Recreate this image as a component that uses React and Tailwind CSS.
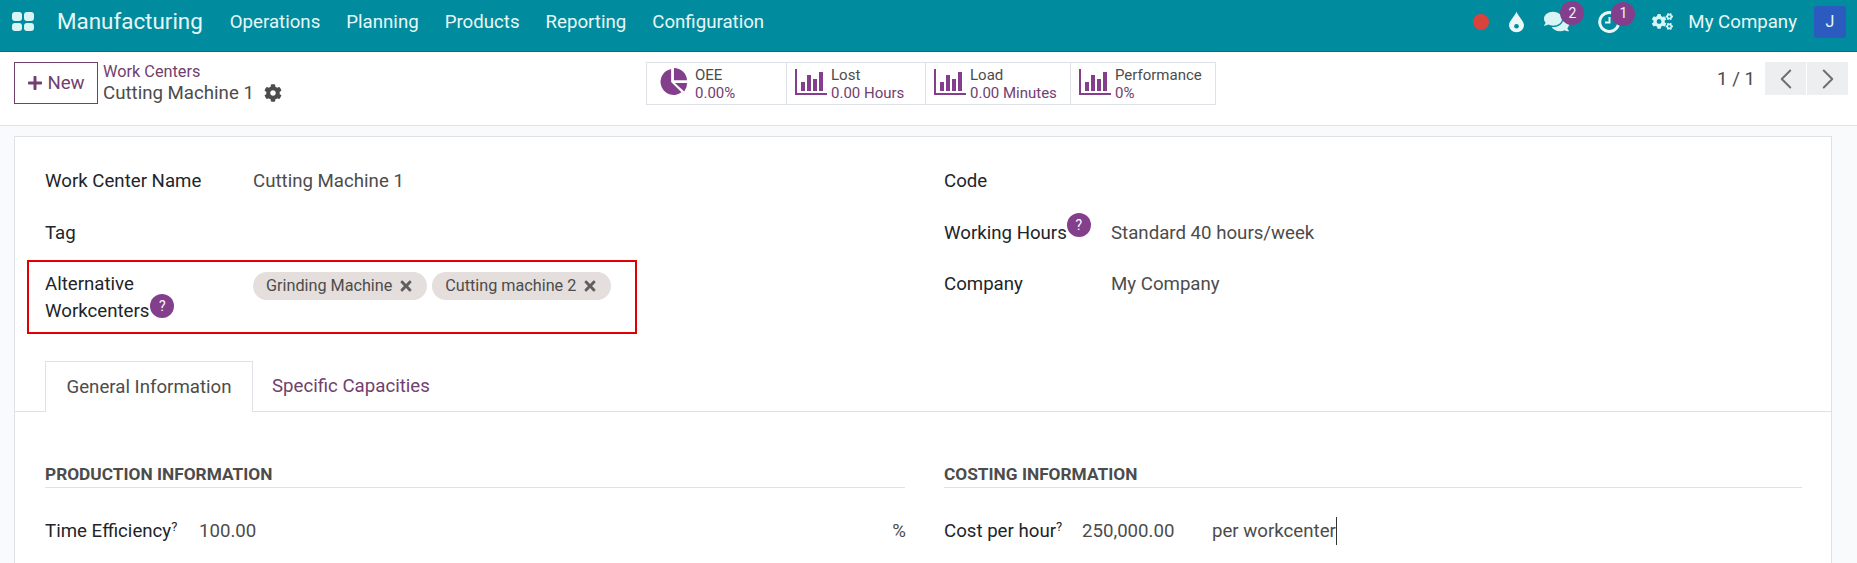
import React from 'react';
import { FaPlus, FaCog, FaCogs, FaComments, FaTimes } from 'react-icons/fa';
import { ChevronLeft, ChevronRight } from 'lucide-react';

const navItems = ['Operations', 'Planning', 'Products', 'Reporting', 'Configuration'];

const BarChart = () => (
  <svg viewBox="0 0 32 26" className="w-[32px] h-[26px] mb-[3px] fill-[#843f8c] shrink-0">
    <path d="M0 0h2v24h30v2H0z" />
    <path d="M6 13h4v9H6zM12 6h4v16h-4zM18 10h4v12h-4zM24 3h4v19h-4z" />
  </svg>
);

const Pie = () => (
  <svg viewBox="0 0 32 32" className="w-[30px] h-[30px] mb-[3px] mr-[3px] fill-[#843f8c] shrink-0">
    <path d="M14 2A14 14 0 1 0 25 27L14 16Z" />
    <path d="M17 1A14 14 0 0 1 31 14H17Z" />
    <path d="M18 17H31A14 14 0 0 1 28 26Z" />
  </svg>
);

const Stat = ({ icon, label, value, className }) => (
  <div className={`flex items-center h-full border-r border-[#dee2e6] last:border-r-0 ${className}`}>
    {icon}
    <div className="ml-[4px] text-[15px] leading-[18px]">
      <div className="text-[#4c4c4c]">{label}</div>
      <div className="text-[#71406f]">{value}</div>
    </div>
  </div>
);

const Help = ({ className }) => (
  <span className={`inline-flex w-[24px] h-[24px] rounded-full bg-[#843f8c] text-white text-[14px] items-center justify-center ${className}`}>?</span>
);

const Tag = ({ children }) => (
  <span className="inline-flex items-center h-[28px] px-[13px] rounded-full bg-[#e4dedc] text-[#4c4c4c] text-[16.200px]">
    {children}
    <FaTimes className="ml-[6px] text-[16px] text-[#5f5f5f]" />
  </span>
);

export default function App() {
  return (
    <div className="w-full h-[563px] overflow-hidden bg-[#f9fafb] font-['Roboto',sans-serif] text-[#212529]">
      {/* navbar */}
      <div className="h-[52px] pb-[8px] bg-[#008c9e] border-b border-[#006f7d] flex items-center text-[#e8f7f8]">
        <div className="ml-[12px] w-[22px] h-[19px] grid grid-cols-2 gap-[2px]">
          <span className="rounded-[3px] bg-[#d9f4f5]" />
          <span className="rounded-[3px] bg-[#d9f4f5]" />
          <span className="rounded-[3px] bg-[#d9f4f5]" />
          <span className="rounded-[3px] bg-[#d9f4f5]" />
        </div>
        <div className="ml-[23px] mr-[14px] text-[22.400px]">Manufacturing</div>
        {navItems.map(item => (
          <div key={item} className="px-[13px] text-[18.670px]">{item}</div>
        ))}
        <div className="ml-auto flex items-center">
          <span className="w-[16px] h-[16px] rounded-full bg-[#d9433b]" />
          <svg viewBox="0 0 16 22" className="ml-[20px] w-[15px] h-[22px]">
            <path d="M8 0C10 5 16 10 16 14.500A8 7.500 0 0 1 0 14.500C0 10 6 5 8 0Z" fill="#eaf8f9" />
            <circle cx="8" cy="15.500" r="2.500" fill="#008c9e" />
          </svg>
          <div className="relative ml-[20px]">
            <FaComments className="text-[25px] text-[#d9f4f5]" />
            <span className="absolute -top-[8px] left-[16px] w-[24px] h-[24px] rounded-full bg-[#843f8c] text-[14px] flex items-center justify-center">2</span>
          </div>
          <div className="relative ml-[29px]">
            <svg viewBox="0 0 22 22" className="w-[22px] h-[22px] fill-none stroke-[#e8f7f8] stroke-[3px]">
              <path d="M19 5.500A9.500 9.500 0 1 0 20.500 13" />
              <path d="M11.500 6v5.500H7" strokeWidth="2" />
            </svg>
            <span className="absolute -top-[9px] left-[13px] w-[24px] h-[24px] rounded-full bg-[#843f8c] text-[14px] flex items-center justify-center">1</span>
          </div>
          <FaCogs className="ml-[32px] text-[21px] text-[#d9f4f5]" />
          <div className="ml-[15px] text-[18.670px]">My Company</div>
          <div className="ml-[17px] mr-[11px] mt-[1px] w-[32px] h-[32px] rounded-[3px] bg-[#2b5bbf] flex items-center justify-center text-[16px]">J</div>
        </div>
      </div>

      {/* control panel */}
      <div className="h-[74px] bg-white border-b border-[#dee2e6] pt-[10px] flex">
        <div className="w-[646px] pl-[14px] flex items-start">
          <div className="w-[84px] h-[42px] border border-[#71406f] flex items-center justify-center text-[#71406f] text-[18.670px]">
            <FaPlus className="text-[16px] mr-[4px]" />New
          </div>
          <div className="ml-[5px] -mt-[2px]">
            <div className="text-[16.300px] leading-[24px] text-[#71406f]">Work Centers</div>
            <div className="text-[18.670px] leading-[18px] text-[#4c4c4c] flex items-center">
              Cutting Machine 1
              <FaCog className="ml-[10px] text-[18px]" />
            </div>
          </div>
        </div>
        <div className="w-[570px] h-[43px] border border-[#dee2e6] flex">
          <Stat className="w-[140px] pl-[11px]" label="OEE" value="0.00%" icon={<Pie />} />
          <Stat className="w-[139px] pl-[8px]" label="Lost" value="0.00 Hours" icon={<BarChart />} />
          <Stat className="w-[145px] pl-[8px]" label="Load" value="0.00 Minutes" icon={<BarChart />} />
          <Stat className="flex-1 pl-[8px]" label="Performance" value="0%" icon={<BarChart />} />
        </div>
        <div className="flex-1 flex items-start justify-end pr-[9px]">
          <div className="h-[33px] flex items-center text-[18.670px] text-[#4c4c4c] mr-[10px]">1 / 1</div>
          <div className="w-[41px] h-[33px] bg-[#eceef0] flex items-center justify-center text-[#6f6f6f] mr-[1px]"><ChevronLeft size={34} strokeWidth={1.4} /></div>
          <div className="w-[41px] h-[33px] bg-[#eceef0] flex items-center justify-center text-[#6f6f6f]"><ChevronRight size={34} strokeWidth={1.4} /></div>
        </div>
      </div>

      {/* form sheet */}
      <div className="pl-[14px] pr-[25px] pt-[10px]">
        <div className="h-[430px] bg-white border border-[#dee2e6] text-[18.670px]">
          <div className="grid grid-cols-[890px_1fr] h-[224px] pl-[12px]">
            <div className="pt-[18px]">
              <div className="h-[52px] pl-[18px] flex items-center">
                <div className="w-[208px]">Work Center Name</div>
                <div className="text-[#4c4c4c]">Cutting Machine 1</div>
              </div>
              <div className="h-[52px] pl-[18px] flex items-center">Tag</div>
              <div className="mt-[1px] w-[610px] h-[74px] border-2 border-[#e00000] pl-[16px] pt-[9px] flex">
                <div className="w-[208px] leading-[27px]">
                  Alternative<br />
                  <span className="relative">Workcenters<Help className="absolute -top-[6px] left-[100%] ml-[1px]" /></span>
                </div>
                <div className="flex gap-[5px] pt-[1px] items-start">
                  <Tag>Grinding Machine</Tag>
                  <Tag>Cutting machine 2</Tag>
                </div>
              </div>
            </div>
            <div className="pt-[18px] pl-[27px]">
              <div className="h-[52px] flex items-center">Code</div>
              <div className="h-[52px] flex items-center">
                <div className="w-[167px]">
                  <span className="relative">Working Hours<Help className="absolute -top-[9px] left-[100%]" /></span>
                </div>
                <div className="text-[#4c4c4c]">Standard 40 hours/week</div>
              </div>
              <div className="h-[50px] flex items-center">
                <div className="w-[167px]">Company</div>
                <div className="text-[#4c4c4c]">My Company</div>
              </div>
            </div>
          </div>

          {/* tabs */}
          <div className="h-[51px] border-b border-[#dee2e6] pl-[30px] flex">
            <div className="w-[208px] h-[51px] bg-white border border-[#dee2e6] border-b-0 flex items-center justify-center text-[#4c4c4c]">General Information</div>
            <div className="px-[19px] flex items-center text-[#71406f]">Specific Capacities</div>
          </div>

          <div className="grid grid-cols-[860px_858px] gap-x-[39px] pl-[30px] pt-[52px]">
            <div>
              <div className="h-[24px] border-b border-[#dee2e6] font-bold text-[17.300px] text-[#4c4c4c] leading-[20px]">PRODUCTION INFORMATION</div>
              <div className="mt-[29px] flex items-center">
                <div className="w-[154px]">Time Efficiency<sup className="text-[13px]">?</sup></div>
                <div className="text-[#4c4c4c]">100.00</div>
                <div className="ml-auto -mr-[1px] text-[#4c4c4c]">%</div>
              </div>
            </div>
            <div>
              <div className="h-[24px] border-b border-[#dee2e6] font-bold text-[17.300px] text-[#4c4c4c] leading-[20px]">COSTING INFORMATION</div>
              <div className="mt-[29px] flex items-center">
                <div className="w-[138px]">Cost per hour<sup className="text-[13px]">?</sup></div>
                <div className="w-[130px] text-[#4c4c4c]">250,000.00</div>
                <div className="text-[#4c4c4c] border-r border-[#333]">per workcenter</div>
              </div>
            </div>
          </div>
        </div>
      </div>
    </div>
  );
}
